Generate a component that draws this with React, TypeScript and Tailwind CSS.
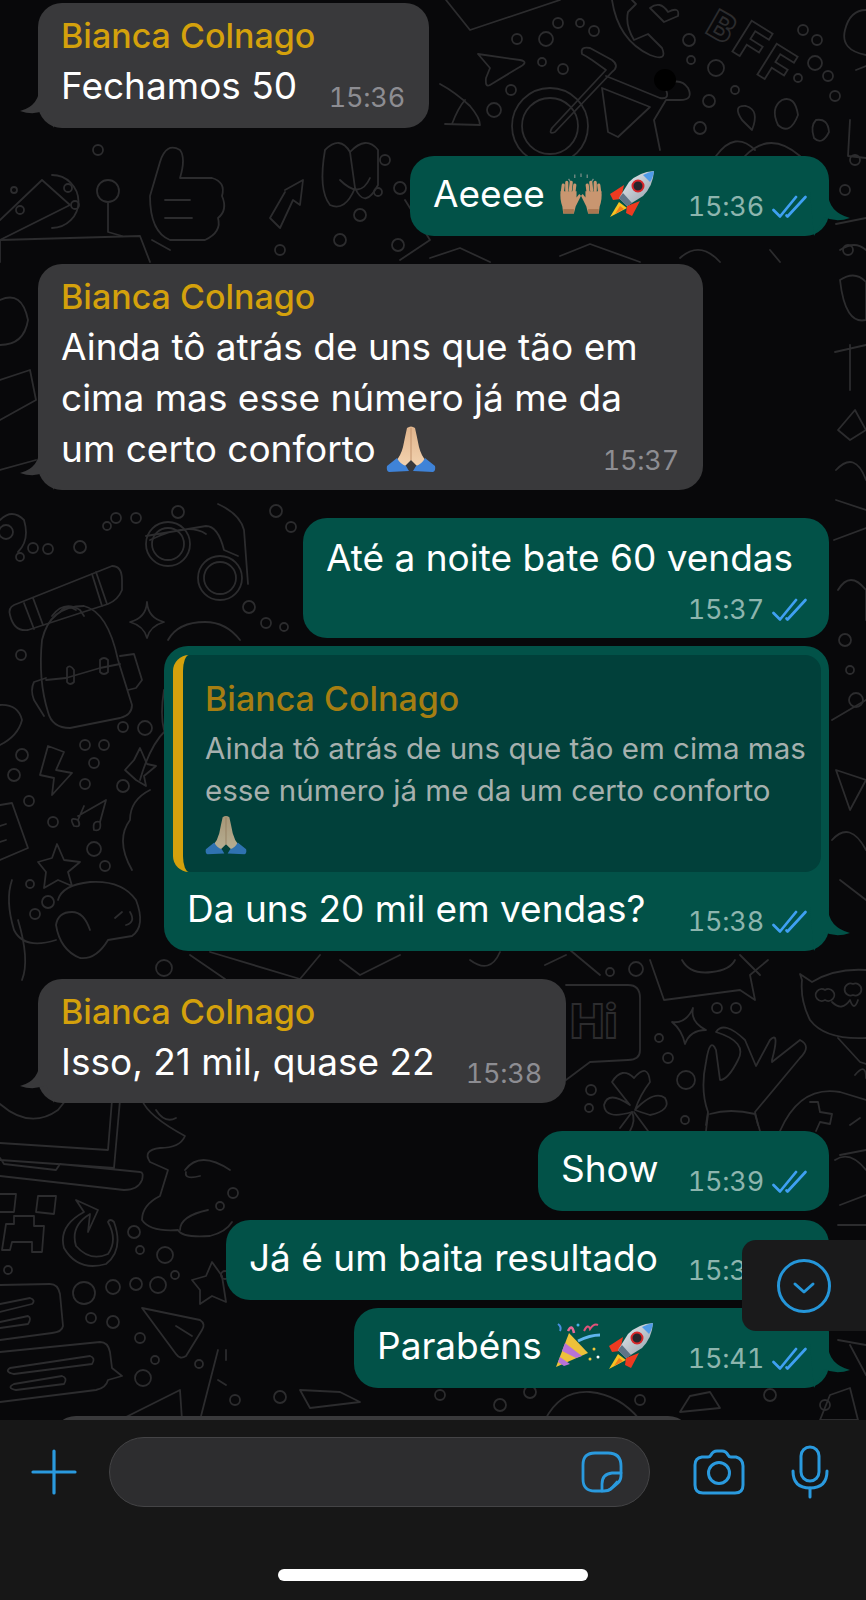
import React from "react";

const DOTS: [number, number, number][] = [
  // top right
  [517, 39, 5], [546, 39, 7], [558, 23, 5], [580, 23, 4], [594, 31, 5], [542, 62, 4], [563, 69, 5], [511, 90, 5], [494, 110, 7],
  [689, 40, 6], [691, 60, 4], [716, 68, 8], [735, 90, 4], [709, 101, 6], [700, 128, 6], [803, 30, 5], [817, 40, 5], [815, 63, 7], [798, 78, 4], [828, 76, 5], [835, 96, 5],
  // under first bubble
  [98, 150, 5], [68, 188, 4], [75, 205, 4], [14, 190, 3], [20, 210, 4], [360, 215, 6], [340, 240, 6], [280, 250, 5],
  [430, 225, 5], [398, 245, 6], [385, 160, 5], [400, 188, 6], [378, 192, 4],
  // left column middle
  [6, 532, 7], [20, 557, 4], [33, 548, 5], [48, 549, 5], [80, 547, 6], [116, 518, 5], [107, 526, 4], [136, 518, 5], [178, 512, 6], [276, 511, 6], [291, 527, 5],
  [249, 607, 6], [266, 623, 5], [284, 627, 4], [21, 655, 5],
  [123, 727, 5], [145, 728, 7], [85, 745, 5], [104, 745, 5], [22, 755, 6], [14, 775, 6], [94, 763, 5], [85, 784, 5], [123, 786, 6], [29, 801, 5], [53, 822, 5],
  [94, 849, 7], [105, 866, 5], [30, 884, 4], [48, 902, 6], [35, 914, 5], [164, 968, 8],
  // right column
  [610, 972, 4], [636, 969, 7], [717, 1008, 5], [736, 1008, 5], [659, 1038, 4], [668, 1058, 5], [686, 1080, 9], [591, 1090, 5], [589, 1108, 4], [685, 1120, 4],
  [845, 190, 5], [855, 160, 5], [848, 250, 5], [845, 640, 6], [850, 670, 4], [856, 700, 7],
  // lower left
  [134, 1232, 6], [140, 1250, 4], [165, 1255, 8], [175, 1275, 4], [8, 1270, 4], [84, 1293, 11], [113, 1287, 7], [136, 1284, 6], [158, 1285, 8], [91, 1318, 5], [113, 1322, 6],
  [140, 1338, 5], [155, 1360, 4], [199, 1364, 4], [143, 1378, 8], [233, 1193, 5], [220, 1206, 4], [225, 1275, 4],
  // bottom gaps
  [640, 1400, 5], [770, 1395, 6], [825, 1405, 5], [500, 1405, 6], [530, 1392, 6], [440, 1395, 5], [235, 1400, 5], [280, 1397, 6],
];

const DOODLES: string[] = [
  // pencil + paper plane, top row
  "M446 0 L470 30 L560 0",
  "M478 54 L520 60 Q530 62 518 68 L490 85 Q485 88 486 78 L490 68 Z",
  "M440 84 Q455 92 470 106 Q480 118 480 125 L445 124",
  "M452 124 Q458 108 465 100",
  // bicycle
  "M512 126 A36 36 0 1 0 588 126 A36 36 0 1 0 512 126 Z",
  "M522 126 A27 27 0 1 0 578 126 A27 27 0 1 0 522 126 Z",
  "M552 128 L606 70 L592 60 Q586 56 582 54 Q580 46 590 48 L612 60 Q620 66 612 72 L555 132 Q548 135 552 128 Z",
  "M602 88 L650 107 L618 137 L608 132 Z",
  "M606 76 L660 98 Q672 100 664 86 Q680 76 688 88 Q694 100 680 100 L666 100 L654 120 L660 150",
  // phone + heart
  "M612 0 Q618 40 650 55 Q668 62 662 48 L648 34 L634 40 Q625 25 628 12 L636 4 L632 0",
  "M650 8 Q660 0 668 12 Q680 6 678 16 L664 22 Z",
  // balloons and figure
  "M742 120 Q732 105 746 106 Q760 110 752 130 Z",
  "M782 100 Q795 95 798 115 Q790 136 778 125 Q770 108 782 100 Z",
  "M816 120 Q828 118 829 132 Q822 146 814 138 Q810 126 816 120 Z",
  "M716 156 Q735 130 755 150 M745 156 Q770 130 800 156",
  "M856 70 L866 66 M850 120 L848 156 L866 158",
  "M845 30 Q850 10 866 10 M845 30 Q840 50 866 55",
  // thumbs up & hands row 127-264
  "M150 196 L160 162 Q166 142 180 150 Q186 158 180 178 L212 178 Q226 182 222 196 Q228 210 218 218 Q222 232 205 240 L170 240 Q150 232 150 196 Z",
  "M165 200 L190 200 M165 218 L192 218",
  "M0 220 L42 180 M0 240 L70 205 L42 180",
  "M52 175 A26 26 0 1 1 52 228",
  "M108 180 A11 11 0 1 1 108 202 A11 11 0 1 1 108 180 M108 202 L108 232 L122 236",
  "M152 240 L170 250",
  "M285 190 L303 180 L300 205 L293 200 L280 228 L270 218 L285 192",
  "M325 150 Q340 135 350 152 L355 188 Q345 212 330 205 Q318 190 325 150 Z",
  "M350 152 Q366 135 378 150 L378 185 Q365 210 355 188",
  "M340 180 Q360 200 370 178",
  "M400 260 L430 240 L405 200",
  "M0 262 L0 240 L140 236 L150 262",
  "M430 258 L460 248 L490 262",
  "M560 256 L590 244 L640 262 M680 258 Q700 240 720 262 M770 250 L780 262",
  "M836 224 L866 218 M840 250 Q855 240 866 250",
  // right margin
  "M840 280 Q855 270 866 282 L866 320 Q845 325 840 280 Z",
  "M835 352 L866 345 M850 345 L850 390",
  "M838 430 L855 410 L866 430 L850 440 Z",
  "M836 470 Q855 450 866 480 M836 500 L866 510",
  "M834 540 L866 528 M838 590 Q850 570 866 590 L866 620",
  "M832 720 L866 700 M836 770 L866 780 L850 810 Z",
  "M832 840 Q850 820 866 850 M840 880 L866 900",
  // left margin
  "M0 300 Q22 290 28 320 Q24 345 0 345",
  "M0 380 L30 370 L36 400 L0 420",
  "M0 470 L36 460",
  "M0 520 Q12 508 24 520 Q30 540 18 552",
  // bedroll & backpack
  "M14 605 L112 566 Q122 566 122 580 L122 590 Q118 600 108 604 L28 630 Q14 632 10 615 Q8 608 14 605 Z",
  "M24 603 L34 629 M33 598 L43 625 M96 572 L107 604 M92 574 L102 606",
  "M52 616 Q64 600 80 610 L84 616 M60 612 Q66 604 76 610",
  "M42 640 Q50 606 84 606 Q108 612 118 660 L132 705 Q132 715 120 718 L70 728 Q52 728 48 712 Q38 680 42 640 Z",
  "M46 680 L66 678 L100 668 L120 664",
  "M67 668 L67 682 Q70 686 74 682 L74 670 Q70 664 67 668 Z M100 660 L100 672 Q104 676 108 672 L108 660 Q104 656 100 660 Z",
  "M120 656 L134 654 L142 680 L136 688 L128 690",
  "M46 678 L34 682 Q30 690 34 700 L44 716",
  // glasses
  "M146 544 A22 22 0 1 0 190 544 A22 22 0 1 0 146 544 Z M152 544 A16 16 0 1 0 184 544 A16 16 0 1 0 152 544 Z",
  "M198 578 A22 22 0 1 0 242 578 A22 22 0 1 0 198 578 Z M204 578 A16 16 0 1 0 236 578 A16 16 0 1 0 204 578 Z",
  "M146 536 L206 526 Q218 526 224 550 L238 556 M150 540 Q188 522 206 534",
  "M218 504 Q240 514 244 530 L248 584",
  // sparkle
  "M147 602 Q148 618 164 622 Q150 626 147 638 Q144 626 130 622 Q146 618 147 602 Z",
  // blob
  "M0 705 Q18 704 22 720 Q18 736 0 745",
  // curve near quote
  "M168 640 Q178 622 205 622 Q226 622 240 640",
  "M164 690 Q160 715 164 730",
  // lightning
  "M48 746 L64 752 L56 770 L72 773 L52 795 L54 778 L40 775 Z",
  // stars
  "M140 748 L147 764 L156 766 L144 776 L146 786 L136 780 L125 770 L134 760 Z",
  "M57 844 L64 860 L80 862 L68 872 L72 886 L58 880 L44 888 L46 872 L38 862 L52 858 Z",
  // music note
  "M78 816 L106 800 L100 822 M84 806 L78 820 M78 820 Q68 816 74 826 Q82 828 78 820 M100 822 Q92 820 94 830 Q102 832 100 822",
  // note pad left
  "M0 805 L12 803 L28 848 L0 860 M0 826 L6 824 M0 842 L6 840",
  // dog
  "M58 900 Q62 885 90 882 Q122 880 136 900 Q146 926 132 936 L108 940 Q96 960 80 958 Q60 950 56 925 Q58 912 72 912 Q84 912 90 930",
  "M12 880 Q5 900 14 930 Q24 950 56 940 M18 920 Q30 960 22 980",
  "M115 918 L122 912 M126 925 Q136 922 130 912",
  // big paw/teddy
  "M140 780 Q150 745 166 730 M132 870 Q115 840 130 820 Q130 800 150 790",
  // bottom of quote
  "M190 955 L225 979 M210 952 L300 979 L320 955",
  "M340 960 L360 975 L400 955 M470 960 Q490 975 500 952 M545 965 L566 955",
  "M570 950 L600 975 M740 955 L760 975",
  // hi bubble
  "M566 985 L628 985 Q640 985 640 998 L640 1050 Q640 1060 628 1060 L590 1062 L566 1080",
  // chat box with face
  "M650 960 L664 1000 L740 990 L755 1000 L750 975 L768 960",
  "M682 960 Q690 975 712 972 Q730 970 735 960",
  // sparkle
  "M693 1008 Q690 1022 706 1030 Q690 1030 685 1044 Q682 1030 672 1022 Q686 1024 693 1008 Z",
  // ok hand
  "M706 1125 L708 1112 Q700 1090 706 1062 Q710 1036 716 1050 L720 1080 Q728 1080 738 1060 Q748 1042 716 1032 Q724 1020 745 1040 L756 1066 L770 1040 Q780 1030 772 1060 L772 1062 L800 1040 Q812 1046 800 1058 L755 1112 L758 1125",
  "M710 1114 Q730 1108 755 1114 L760 1131",
  "M708 1114 L706 1131",
  // clover
  "M630 1131 Q636 1120 632 1112 Q605 1120 604 1105 Q608 1090 630 1105 Q618 1090 612 1082 Q622 1066 634 1078 Q648 1062 650 1082 Q640 1095 635 1110 Q654 1090 665 1098 Q672 1110 650 1115 Q640 1112 635 1110",
  "M620 1128 L632 1112 M648 1131 L634 1112",
  // cat
  "M802 980 L800 974 L812 982 Q835 968 866 970 M802 980 Q800 1000 810 1020 Q825 1040 866 1038",
  "M825 990 A6 6 0 1 0 825 1000 A6 6 0 1 0 825 990 Z M853 984 A6 6 0 1 0 853 995 A6 6 0 1 0 853 984 Z",
  "M832 1002 Q842 1012 850 1000 Q854 1012 858 1000",
  "M838 1038 L860 1062 L866 1064 M855 1075 Q866 1062 866 1078",
  // controller
  "M780 1131 Q800 1085 840 1092 L866 1100 M810 1102 L818 1102 L820 1112 L832 1114 L830 1124 L820 1122 L816 1131",
  "M850 1125 L860 1118 M866 1150 L840 1155",
  // below green bubbles, right margin
  "M835 1160 Q850 1150 866 1170 M840 1205 L866 1195 M838 1225 L866 1225",
  // laptop
  "M112 1100 L108 1150 L0 1143 M120 1100 L114 1168 L0 1160 M0 1158 L4 1164 L56 1170 L60 1164 L140 1172 Q144 1172 142 1180 Q138 1190 124 1190 L0 1176",
  "M0 1104 Q30 1130 58 1110 L66 1100",
  // cloud with face
  "M142 1100 Q148 1116 185 1136 Q180 1148 160 1148 Q142 1150 150 1162 L168 1170 L160 1196 Q142 1205 142 1220 Q150 1232 178 1230 Q182 1238 210 1236 Q226 1232 232 1222",
  "M156 1110 Q165 1124 176 1118 M185 1170 Q200 1150 230 1170 M186 1172 Q184 1180 200 1176",
  "M180 1230 Q180 1216 208 1210",
  // creeper
  "M0 1194 L16 1194 L14 1212 L0 1212 M38 1196 L56 1196 L54 1214 L36 1212 Z M14 1216 L34 1216 L34 1226 L44 1226 L42 1252 L32 1252 L32 1242 L12 1242 L10 1250 L2 1250 L6 1224 L14 1224 Z",
  // refresh arrow
  "M108 1222 Q118 1240 108 1254 Q90 1262 76 1246 Q70 1226 90 1214 L88 1232 L98 1210 L76 1200 L84 1212 Q58 1226 64 1248 Q78 1272 106 1264 Q124 1250 114 1222 Q110 1218 108 1222 Z",
  // stacked messages
  "M0 1285 L50 1284 Q58 1284 60 1294 L63 1326 Q62 1332 52 1333 L0 1340",
  "M0 1304 L30 1298 Q36 1300 32 1304 L0 1312 M0 1322 L28 1316 Q32 1318 28 1324 L0 1328",
  "M0 1352 L100 1342 Q108 1342 110 1352 L112 1368 L122 1376 L108 1380 Q106 1388 96 1390 L0 1402",
  "M10 1368 L90 1356 Q96 1358 92 1364 L14 1374 Q4 1372 10 1368 Z M14 1384 L62 1376 Q68 1378 64 1384 L16 1390 Q6 1388 14 1384 Z",
  // kite
  "M142 1308 L200 1320 Q206 1324 202 1330 L186 1356 Q180 1360 176 1354 Z M176 1326 L192 1336",
  // right bottom chart
  "M218 1350 L200 1420 M226 1350 L226 1360 M218 1380 L226 1385",
  "M120 1420 L180 1390 L182 1420",
  // star near green
  "M212 1262 L222 1276 L226 1302 L212 1296 L200 1304 L200 1290 L192 1280 L206 1276 Z",
  // bottom strip
  "M545 1420 Q560 1390 590 1392 Q620 1395 640 1420",
  "M690 1396 L710 1392 L720 1408 L680 1412 Z",
  "M830 1395 L850 1388 L858 1420 L820 1420 Z",
  "M300 1390 L340 1392 L360 1402 L310 1408 Z",
  "M840 1260 L866 1250 M838 1340 L866 1345 M850 1345 L866 1375",
];

function Wallpaper() {
  return (
    <svg className="absolute left-0 top-0" width={866} height={1420} viewBox="0 0 866 1420" fill="none">
      <g stroke="#2c2c2e" strokeWidth={1.8} strokeLinecap="round" strokeLinejoin="round">
        {DOODLES.map((d, i) => (
          <path key={i} d={d} />
        ))}
        {DOTS.map(([cx, cy, r], i) => (
          <circle key={i} cx={cx} cy={cy} r={r} />
        ))}
      </g>
      <g fill="none" stroke="#2c2c2e" strokeWidth={1.8} fontFamily="Inter, sans-serif" fontWeight={800}>
        <text x={0} y={0} fontSize={38} transform="translate(704 32) rotate(30)">B</text>
        <text x={0} y={0} fontSize={50} transform="translate(730 50) rotate(32)">F</text>
        <text x={0} y={0} fontSize={50} transform="translate(755 73) rotate(32)">F</text>
        <text x={570} y={1038} fontSize={46}>Hi</text>
      </g>
      <circle cx={665} cy={80} r={11} fill="#000000" />
    </svg>
  );
}

function Checks() {
  return (
    <svg width={36} height={24} viewBox="0 0 36 24" fill="none" stroke="#3fa0f2" strokeWidth={2.7} strokeLinecap="round" strokeLinejoin="round">
      <path d="M1.5 15 L8 21.5 L24 2" />
      <path d="M14.5 20.5 L15.5 21.5 L33.5 2" />
    </svg>
  );
}

function Tail({ side }: { side: "left" | "right" }) {
  if (side === "left") {
    return (
      <svg className="absolute bottom-0 left-[-18px]" width={34} height={44} viewBox="0 0 34 44">
        <path d="M20 0 Q20 22 0 27 Q14 32 26 26 L34 44 L34 0 Z" fill="#39393b" />
      </svg>
    );
  }
  return (
    <svg className="absolute bottom-0 right-[-21px]" width={40} height={44} viewBox="0 0 40 44">
      <path d="M18 0 Q18 20 40 26 Q26 31 14 25 L4 44 L0 0 Z" fill="#025248" />
    </svg>
  );
}

function Time({ value, sent }: { value: string; sent?: boolean }) {
  if (sent) {
    return (
      <span className="flex items-center gap-[8px] whitespace-nowrap text-[27px] leading-[32px] tracking-[-0.2px] tabular-nums text-[#8db5ae]">
        {value}
        <Checks />
      </span>
    );
  }
  return <span className="whitespace-nowrap text-[27px] leading-[32px] tracking-[-0.2px] tabular-nums text-[#8d8d92]">{value}</span>;
}

function Praying({ size }: { size: number }) {
  return (
    <svg width={size} height={size} viewBox="0 0 50 48" className="inline-block shrink-0">
      <defs>
        <linearGradient id="skin" x1="0" y1="0" x2="0" y2="1">
          <stop offset="0" stopColor="#e0b48c" />
          <stop offset="1" stopColor="#f3d3b0" />
        </linearGradient>
      </defs>
      <path d="M21 3 Q25 0 29 3 Q31 12 33 22 Q35 30 40 36 L32 42 L25 35 L18 42 L10 36 Q15 30 17 22 Q19 12 21 3 Z" fill="url(#skin)" />
      <path d="M25 3 L25 35" stroke="#c2926c" strokeWidth={1} />
      <path d="M1 41 L11 33 Q14 39 20 41 L23 46 L3 47 Q0 46 1 41 Z" fill="#3f83d8" />
      <path d="M49 41 L39 33 Q36 39 30 41 L27 46 L47 47 Q50 46 49 41 Z" fill="#3f83d8" />
    </svg>
  );
}

function Rocket() {
  return (
    <svg width={46} height={48} viewBox="0 0 46 48" className="inline-block shrink-0">
      <defs>
        <linearGradient id="hull" x1="0" y1="0" x2="1" y2="1">
          <stop offset="0" stopColor="#eef2f5" />
          <stop offset="1" stopColor="#8d99a6" />
        </linearGradient>
      </defs>
      <path d="M10 32 L1 47 L18 38 Z" fill="#f7c222" />
      <path d="M11 36 L6 44 L15 39 Z" fill="#f27a1a" />
      <path d="M15 15 L1 24 L4 30 L12 29 Z" fill="#ee3a20" />
      <path d="M31 31 L23 46 L17 43 L18 36 Z" fill="#ee3a20" />
      <path d="M45 1 Q30 2 20 12 L10 28 L18 36 L34 26 Q44 16 45 1 Z" fill="url(#hull)" />
      <path d="M45 1 Q40 2 34 5 L41 12 Q44 8 45 1 Z" fill="#4f9be8" />
      <circle cx={29} cy={16} r={5.5} fill="#26262c" stroke="#d8262a" strokeWidth={2} />
      <path d="M10 28 L18 36 L23 33 L14 23 Z" fill="#5f7487" />
    </svg>
  );
}

function RaisedHands() {
  const hand = (
    <g>
      <path d="M6 22 L7 14 M11 20 L11 11 M15 20 L16 11 M19 22 L20 14" stroke="#c99670" strokeWidth={3.6} strokeLinecap="round" />
      <path d="M4 21 L22 21 L22 28 L25 24 L27 26 L21 38 L19 46 L7 46 L6 38 Q3 30 4 21 Z" fill="#c99670" />
      <rect x={7} y={41} width={12} height={5} fill="#a97650" />
    </g>
  );
  return (
    <svg width={48} height={48} viewBox="0 0 54 48" className="inline-block shrink-0">
      <path d="M13 7 L15 10 M20 2 L20 6 M27 1 L27 5 M34 2 L34 6 M41 7 L39 10" stroke="#7c8f88" strokeWidth={1.4} />
      {hand}
      <g transform="matrix(-1 0 0 1 54 0)">{hand}</g>
    </svg>
  );
}

function Party() {
  return (
    <svg width={50} height={50} viewBox="0 0 50 50" className="inline-block shrink-0">
      <path d="M15 12 L2 46 L34 32 Z" fill="#eec13a" />
      <path d="M11 22 L28 35 L22 37 L8 30 Z" fill="#b873d8" />
      <path d="M6 36 L16 43 L10 45 L4 41 Z" fill="#b873d8" />
      <path d="M24 20 Q36 14 46 14" stroke="#5fb4ec" strokeWidth={3} fill="none" />
      <path d="M14 10 Q18 2 20 12" stroke="#e86a9a" strokeWidth={2.5} fill="none" />
      <path d="M30 10 Q34 2 36 8 Q40 2 44 4" stroke="#e0527a" strokeWidth={2} fill="none" />
      <path d="M4 3 Q8 6 6 10" stroke="#4a8fe0" strokeWidth={2} fill="none" />
      <circle cx={40} cy={28} r={1.5} fill="#f0c93a" />
      <circle cx={44} cy={36} r={1.5} fill="#ffffff" />
      <circle cx={36} cy={38} r={1.5} fill="#f0c93a" />
      <circle cx={24} cy={4} r={1.5} fill="#4ab0e8" />
    </svg>
  );
}

function Name({ dim }: { dim?: boolean }) {
  return (
    <div className={dim ? "whitespace-nowrap text-[34px] font-medium leading-[40px] text-[#a67e12]" : "whitespace-nowrap text-[34px] font-medium leading-[40px] text-[#d4a10c]"}>
      Bianca Colnago
    </div>
  );
}

function Incoming({ className, lines, time, emoji, tail }: { className: string; lines: string[]; time: string; emoji?: boolean; tail?: boolean }) {
  return (
    <div className={`relative flex flex-col self-start rounded-[24px] bg-[#39393b] pb-[16px] pl-[23px] pr-[24px] pt-[13px] ${className}`}>
      {tail && <Tail side="left" />}
      <Name />
      <div className="mt-[4px] text-[37px] leading-[51px] text-white">
        {lines.slice(0, -1).map((l) => (
          <div key={l} className="whitespace-nowrap">{l}</div>
        ))}
        <div className="flex h-[51px] items-start justify-between whitespace-nowrap">
          <span className="flex h-[51px] items-center gap-[10px]">
            {lines[lines.length - 1]}
            {emoji && <Praying size={50} />}
          </span>
          <span className="mt-[22px] flex"><Time value={time} /></span>
        </div>
      </div>
    </div>
  );
}

function Outgoing({ className, children, time, tail }: { className: string; children: React.ReactNode; time: string; tail?: boolean }) {
  return (
    <div className={`relative flex items-start justify-between self-end rounded-[24px] bg-[#025248] pb-[17px] pl-[23px] pr-[21px] pt-[12px] text-[37px] leading-[51px] text-white ${className}`}>
      {tail && <Tail side="right" />}
      <span className="flex h-[51px] items-center gap-[12px] whitespace-nowrap">{children}</span>
      <span className="mt-[23px]"><Time value={time} sent /></span>
    </div>
  );
}

function Composer() {
  return (
    <div className="relative flex h-[180px] shrink-0 flex-col bg-[#171717]">
      <div className="flex h-[121px] items-center pb-[17px] text-[#2a9ade]">
        <svg className="ml-[31px] shrink-0" width={46} height={46} viewBox="0 0 46 46" fill="none" stroke="currentColor" strokeLinecap="round">
          <path d="M23 2 L23 44" strokeWidth={3.2} />
          <path d="M2 23 L44 23" strokeWidth={3.2} />
        </svg>
        <div className="ml-[32px] flex h-[70px] w-[541px] items-center justify-end rounded-[35px] border border-[#444446] bg-[#2d2d2f] pr-[26px]">
          <svg width={42} height={42} viewBox="0 0 42 42" fill="none" stroke="currentColor" strokeWidth={2.8} strokeLinecap="round" strokeLinejoin="round">
            <path d="M14 2 L27 2 Q40 2 40 15 L40 25 Q40 29 37 32 L30 38 Q27 40 23 40 L14 40 Q2 40 2 28 L2 14 Q2 2 14 2 Z" />
            <path d="M21 40 L21 33 Q21 23 31 22 L40 22 M28 39 Q32 36 36 31" />
          </svg>
        </div>
        <svg className="ml-[43px] shrink-0" width={52} height={46} viewBox="0 0 52 46" fill="none" stroke="currentColor" strokeWidth={3} strokeLinejoin="round">
          <path d="M9 8 L15 8 Q17 8 18 6 Q20 2 24 2 L29 2 Q33 2 35 6 Q36 8 38 8 L43 8 Q50 10 50 17 L50 36 Q50 44 42 44 L10 44 Q2 44 2 36 L2 16 Q2 9 9 8 Z" />
          <circle cx={26} cy={24} r={10.5} />
        </svg>
        <svg className="ml-[46px] shrink-0" width={38} height={54} viewBox="0 0 38 54" fill="none" stroke="currentColor" strokeWidth={3} strokeLinecap="round">
          <rect x={10} y={2} width={18} height={34} rx={9} />
          <path d="M2 26 Q2 43 19 43 Q36 43 36 26" />
          <path d="M19 43 L19 52" />
        </svg>
      </div>
      <div className="mt-[28px] h-[12px] w-[310px] self-center rounded-full bg-white" />
    </div>
  );
}

export default function App() {
  return (
    <div className="relative flex h-[1600px] w-[866px] flex-col overflow-hidden bg-[#08080a] font-['Inter',sans-serif]">
      <Wallpaper />
      <div className="relative flex h-[1420px] shrink-0 flex-col overflow-hidden pl-[38px] pr-[37px] pt-[3px]">
        <Incoming className="h-[125px] w-[391px]" lines={["Fechamos 50"]} time="15:36" tail />
        <Outgoing className="mt-[28px] h-[80px] w-[419px]" time="15:36" tail>
          Aeeee
          <span className="flex items-center gap-[4px]"><RaisedHands /><Rocket /></span>
        </Outgoing>
        <Incoming className="mt-[28px] h-[226px] w-[665px]" lines={["Ainda tô atrás de uns que tão em", "cima mas esse número já me da", "um certo conforto"]} time="15:37" emoji tail />
        <div className="relative mt-[28px] flex h-[120px] w-[526px] flex-col self-end rounded-[24px] bg-[#025248] pl-[23px] pr-[21px] pt-[14px] text-[37px] leading-[51px] text-white">
          <span className="whitespace-nowrap">Até a noite bate 60 vendas</span>
          <span className="mt-[11px] self-end"><Time value="15:37" sent /></span>
        </div>
        <div className="relative mt-[8px] flex h-[305px] w-[665px] flex-col self-end rounded-[24px] bg-[#025248] pl-[9px] pr-[8px] pt-[9px]">
          <Tail side="right" />
          <div className="h-[217px] overflow-hidden rounded-[16px] border-l-[10px] border-[#d4a10c] bg-[#01403a] pl-[22px] pt-[24px]">
            <Name dim />
            <div className="mt-[8px] text-[29.5px] leading-[42px] text-[#a6b0ae]">
              <div className="whitespace-nowrap">Ainda tô atrás de uns que tão em cima mas</div>
              <div className="whitespace-nowrap">esse número já me da um certo conforto</div>
              <span className="inline-block opacity-75"><Praying size={42} /></span>
            </div>
          </div>
          <div className="mt-[11px] flex h-[51px] items-start justify-between pl-[14px] pr-[13px] text-[37px] leading-[51px] text-white">
            <span className="whitespace-nowrap">Da uns 20 mil em vendas?</span>
            <span className="mt-[23px]"><Time value="15:38" sent /></span>
          </div>
        </div>
        <Incoming className="mt-[28px] h-[124px] w-[528px]" lines={["Isso, 21 mil, quase 22"]} time="15:38" tail />
        <Outgoing className="mt-[28px] h-[80px] w-[291px]" time="15:39">Show</Outgoing>
        <Outgoing className="mt-[9px] h-[80px] w-[603px]" time="15:39">Já é um baita resultado</Outgoing>
        <Outgoing className="mt-[8px] h-[80px] w-[475px]" time="15:41" tail>
          Parabéns
          <span className="flex items-center gap-[4px]"><Party /><Rocket /></span>
        </Outgoing>
        <div className="absolute bottom-[-20px] left-[52px] h-[24px] w-[640px] rounded-t-[24px] bg-[#39393b]" />
      </div>
      <Composer />
      <div className="absolute right-0 top-[1240px] flex h-[91px] w-[124px] items-center justify-center rounded-l-[14px] bg-[#1a1a1b]">
        <svg width={56} height={56} viewBox="0 0 56 56" fill="none" stroke="#2596d9" strokeWidth={3} strokeLinecap="round" strokeLinejoin="round">
          <circle cx={28} cy={28} r={25.5} />
          <path d="M19 26 L28 34 L37 26" />
        </svg>
      </div>
    </div>
  );
}
